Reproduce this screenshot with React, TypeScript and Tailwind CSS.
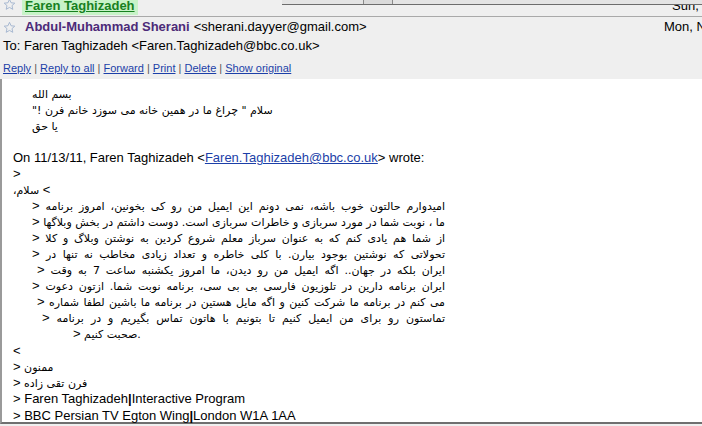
import React from 'react';

const Star = () => (
  <svg width="13" height="13" viewBox="0 0 24 24" fill="none" stroke="#9db0cc" strokeWidth="1.6" strokeLinejoin="round">
    <path d="M12 2.5l2.9 6.3 6.8.7-5.1 4.6 1.5 6.8L12 17.4l-6.1 3.5 1.5-6.8-5.1-4.6 6.8-.7z" />
  </svg>
);

// quoted lines and how far each one starts in from the block edge
const quoted: [string, string][] = [
  ['امیدوارم حالتون خوب باشه، نمی دونم این ایمیل من رو کی بخونین، امروز برنامه', 'pl-0'],
  ['ما ، نوبت شما در مورد سربازی و خاطرات سربازی است. دوست داشتم در بخش وبلاگها', 'pl-0'],
  ['از شما هم یادی کنم که به عنوان سرباز معلم شروع کردین به نوشتن وبلاگ و کلا', 'pl-0'],
  ['تحولاتی که نوشتین بوجود بیارن. با کلی خاطره و تعداد زیادی مخاطب نه تنها در', 'pl-0'],
  ['ایران بلکه در جهان.. اگه ایمیل من رو دیدن، ما امروز یکشنبه ساعت 7 به وقت', 'pl-[5px]'],
  ['ایران برنامه دارین در تلوزیون فارسی بی بی سی، برنامه نوبت شما.  ازتون دعوت', 'pl-0'],
  ['می کنم در برنامه ما شرکت کنین و اگه مایل هستین در برنامه ما باشین لطفا شماره', 'pl-[5px]'],
  ['تماستون رو برای من ایمیل کنیم تا بتونیم با هاتون تماس بگیریم و  در برنامه', 'pl-[10px]'],
];

const fa = "font-['DejaVu_Sans',sans-serif] text-[11px]";
const gt = "font-['Liberation_Sans',sans-serif] text-[13px]";

const App: React.FC = () => {
  const actions = ['Reply', 'Reply to all', 'Forward', 'Print', 'Delete', 'Show original'];

  return (
    <div className="relative w-[702px] h-[426px] overflow-hidden bg-[#efefef] font-['Liberation_Sans',Arial,sans-serif] text-[13px] text-black">
      {/* edge of the toolbar above, lying over the collapsed row */}
      <div className="absolute top-0 left-[282px] right-0 h-[5px] bg-[#e4e4e4] border-b border-[#6d6d6d] flex">
        <div className="w-[81px]" />
        <div className="w-[30px] border-x border-[#8a8a8a] bg-[#dadada]" />
      </div>

      {/* collapsed message above, cut off by the top of the window */}
      <div className="h-[17px] overflow-hidden border-b border-[#a9a9a9]">
        <div className="flex items-start -mt-[3px] h-[19px] leading-[18px]">
          <span className="pl-[3px] pr-[6px] pt-[1px]">
            <Star />
          </span>
          <span className="bg-[#c8f3c8] px-[3px] font-bold text-[#17801f] underline">Faren Taghizadeh</span>
          <span className="flex-1" />
          <span className="w-[30px] shrink-0 overflow-hidden whitespace-nowrap">Sun, Nov 13</span>
        </div>
      </div>

      <div className="flex items-center h-[18px] mt-[1px]">
        <span className="pl-[3px] pr-[9px] flex">
          <Star />
        </span>
        <span className="font-bold text-[#4c2a78]">Abdul-Muhammad Sherani</span>
        <span className="pl-[4px]">&lt;sherani.dayyer@gmail.com&gt;</span>
        <span className="flex-1" />
        <span className="w-[38px] shrink-0 overflow-hidden whitespace-nowrap">Mon, Nov 14</span>
      </div>

      <div className="pl-[3px] pt-[1px] h-[18px] leading-[18px]">To: Faren Taghizadeh &lt;Faren.Taghizadeh@bbc.co.uk&gt;</div>

      <div className="pl-[3px] pt-[6px] h-[25px] text-[11px] text-[#555]">
        {actions.map((a, i) => (
          <React.Fragment key={a}>
            {i > 0 && ' | '}
            <span className="text-[#1c3fa8] underline">{a}</span>
          </React.Fragment>
        ))}
      </div>

      <div className="h-[345px] bg-white border-l-2 border-[#9a9a9a] border-b-2 border-b-[#6f6f6f] pl-[11px] pt-[8px] leading-[16px]">
        <div className={`ml-[19px] w-fit ${fa}`}>
          <div dir="rtl" className="h-[16px] text-left">بسم الله</div>
          <div dir="rtl" className="h-[16px] text-left">سلام " چراغ ما در همین خانه می سوزد خانم فرن !"</div>
          <div dir="rtl" className="h-[16px] text-left">یا حق</div>
        </div>
        <div className="h-[15px]" />
        <div className="h-[16px]">
          On 11/13/11, Faren Taghizadeh &lt;<span className="text-[#1c3fa8] underline">Faren.Taghizadeh@bbc.co.uk</span>&gt; wrote:
        </div>
        <div className="h-[16px]">&gt;</div>
        <div dir="rtl" className={`h-[16px] text-left ${fa}`}>
          <span className={gt}>&gt;</span> سلام،
        </div>
        <div className={`ml-[19px] w-[413px] ${fa}`}>
          {quoted.map(([q, pad]) => (
            <div key={q} className={`h-[16px] whitespace-nowrap text-justify [text-align-last:justify] ${pad}`}>
              <span className={gt}>&gt;</span> {q}
            </div>
          ))}
        </div>
        <div className={`h-[17px] pl-[60px] ${fa}`}>
          <span className={gt}>&gt;</span> صحبت کنیم.
        </div>
        <div className="h-[16px]">&lt;</div>
        <div className={`h-[16px] ${fa}`}>
          <span className={gt}>&gt;</span> ممنون
        </div>
        <div className={`h-[16px] ${fa}`}>
          <span className={gt}>&gt;</span> فرن تقی زاده
        </div>
        <div className="h-[17px]">
          &gt; Faren Taghizadeh<span className="font-bold">|</span>Interactive Program
        </div>
        <div className="h-[16px]">
          &gt; BBC Persian TV Egton Wing<span className="font-bold">|</span>London W1A 1AA
        </div>
      </div>
    </div>
  );
};

export default App;
